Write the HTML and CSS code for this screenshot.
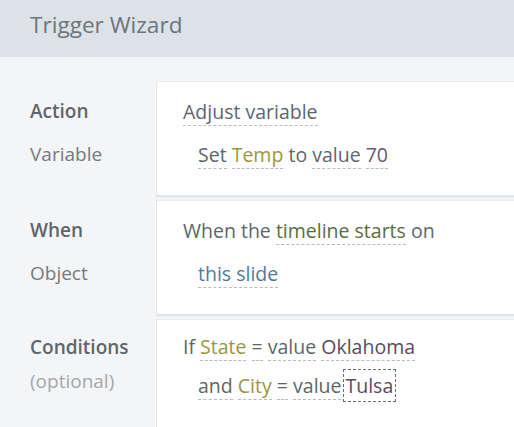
FILE: index.html
```html
<!DOCTYPE html>
<html>
<head>
<meta charset="utf-8">
<link rel="stylesheet" href="styles.css">
</head>
<body>
<div class="wizard">
  <header class="title">Trigger Wizard</header>
  <main class="sections">
    <section class="row">
      <div class="labels">
        <div class="line head">Action</div>
        <div class="line sub">Variable</div>
      </div>
      <div class="card">
        <div class="line"><span class="u">Adjust variable</span></div>
        <div class="line indent"><span class="u">Set</span> <span class="u var">Temp</span> to <span class="u">value</span> <span class="u num">70</span></div>
      </div>
    </section>
    <section class="row">
      <div class="labels">
        <div class="line head">When</div>
        <div class="line sub">Object</div>
      </div>
      <div class="card">
        <div class="line">When the <span class="u event">timeline starts</span> on</div>
        <div class="line indent"><span class="u obj">this slide</span></div>
      </div>
    </section>
    <section class="row cond">
      <div class="labels">
        <div class="line head">Conditions</div>
        <div class="line opt">(optional)</div>
      </div>
      <div class="card">
        <div class="line">If <span class="u var">State</span> <span class="u">=</span> <span class="u">value</span> <span class="u val">Oklahoma</span></div>
        <div class="line indent"><span class="u">and</span> <span class="u var">City</span> <span class="u">=</span> <span class="u">value</span><span class="sel val">Tulsa</span></div>
      </div>
    </section>
  </main>
</div>
</body>
</html>
```

FILE: styles.css
```css
html, body {
  margin: 0;
  padding: 0;
}
body {
  font-family: "Open Sans", "Noto Sans", sans-serif;
  background: #f4f5f6;
  color: #5c666d;
  overflow: hidden;
}
.wizard {
  width: 514px;
  height: 427px;
  overflow: hidden;
}
.title {
  height: 57px;
  box-sizing: border-box;
  padding: 9px 0 0 30px;
  background: #dde2e6;
  color: #6b757d;
  font-size: 22.6px;
  line-height: 32px;
}
.sections {
  display: flex;
  flex-direction: column;
  gap: 3px;
  padding-top: 24px;
}
.row {
  display: grid;
  grid-template-columns: 156px 1fr;
  font-size: 19.5px;
}
.labels {
  padding: 9px 0 0 30px;
  font-size: 19px;
}
.line {
  line-height: 43px;
  white-space: nowrap;
}
.head {
  font-weight: 600;
  color: #5d666d;
}
.sub {
  color: #737b82;
}
.card {
  background: #ffffff;
  height: 116px;
  box-sizing: border-box;
  border-top: 1px solid #e9ebed;
  border-left: 1px solid #e4e7e9;
  border-bottom: 2px solid #e1e5e8;
  box-shadow: 0 1px 0 #eef0f2;
  padding: 8px 0 0 26px;
}
.cond .line {
  line-height: 38.5px;
}
.cond .card {
  padding-top: 8px;
}
.cond .labels {
  padding-top: 9px;
}
.cond .labels .opt {
  color: #a2a8ad;
  line-height: 29px;
}
.indent {
  padding-left: 15px;
}
.u {
  border-bottom: 1px dashed #b7bcc0;
}
.var { color: #9a9640; }
.num { color: #6a586e; }
.event { color: #5c6c3c; }
.obj { color: #4a7d94; }
.val { color: #5b4a60; }
.sel {
  border: 1px dashed #6e6e6e;
  padding: 2px 2px 2px 1px;
  margin-left: 2px;
}
```
